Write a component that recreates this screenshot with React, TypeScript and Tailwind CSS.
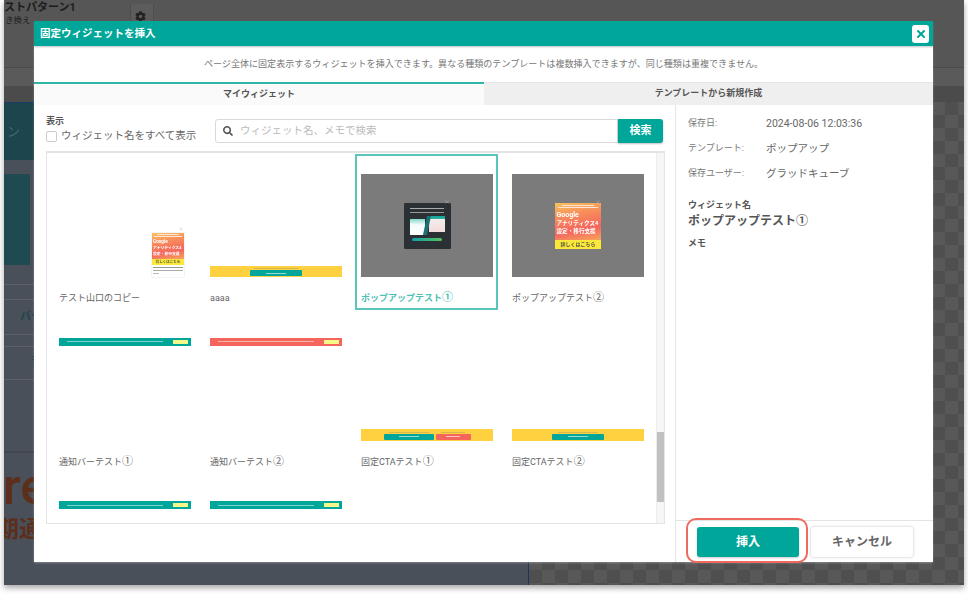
import { X } from "lucide-react";
import { FaCog, FaSearch } from "react-icons/fa";

function TinyText({ className }: { className: string }) {
  return <div className={`h-[1px] ${className}`} />;
}

function PopupClose({ className }: { className: string }) {
  return <X size={6} strokeWidth={1.5} className={`absolute text-[#b5b5b5] ${className}`} />;
}

function GaCard({ footerOnly }: { footerOnly?: boolean }) {
  return (
    <div className={`relative ${footerOnly ? "w-[46px] h-[46px]" : "w-[32px] h-[44px] bg-white shadow-[0_0_1px_#bbb]"}`}>
      <div className={`flex flex-col ${footerOnly ? "h-full" : "h-[32px]"}`}>
        <div className="flex-1 bg-[linear-gradient(170deg,#f6c55c_0%,#f8905a_30%,#f4655f_70%,#f8a55a_100%)]">
          <div className={`flex flex-col items-center gap-[1px] ${footerOnly ? "pt-[2px]" : "pt-[1px]"}`}>
            <TinyText className="bg-[#fde3d8] w-[70%]" />
            <TinyText className="bg-[#fde3d8] w-[85%]" />
          </div>
          <div className={`font-bold text-white ${footerOnly ? "text-[5.6px] leading-[8px] pl-[1.5px] pt-[3px]" : "text-[3.8px] leading-[6px] pl-[1px] pt-[2px]"}`}>
            <div className={footerOnly ? "text-[7px]" : "text-[4.6px]"}>Google</div>
            <div className="whitespace-nowrap">アナリティクス4</div>
            <div className="whitespace-nowrap">設定・移行支援</div>
          </div>
        </div>
        <div className={`bg-[#fbe83a] text-[#554] font-bold text-center whitespace-nowrap ${footerOnly ? "h-[9px] text-[5px] leading-[9px]" : "h-[6px] text-[3.5px] leading-[6px]"}`}>
          詳しくはこちら
        </div>
      </div>
      {!footerOnly && (
        <div className="flex flex-col gap-[2px] px-[1px] pt-[2px]">
          <TinyText className="bg-[#999]" />
          <TinyText className="bg-[#aaa]" />
          <TinyText className="bg-[#bbb] w-[6px]" />
        </div>
      )}
    </div>
  );
}

function DarkCard() {
  return (
    <div className="w-[47px] h-[46px] rounded-[1px] bg-[#2a3033] flex flex-col items-center pt-[5px]">
      <TinyText className="bg-[#aaa] w-[34px]" />
      <TinyText className="bg-[#999] w-[34px] mt-[3px]" />
      <div className="w-[35px] h-[19px] mt-[3px] flex">
        <div className="flex-1 mt-[3px] bg-[linear-gradient(180deg,#7fd8cc_0%,#f4fafa_35%,#ffffff_100%)]" />
        <div className="w-[4px] bg-[#1d6f74] -skew-x-12" />
        <div className="flex-1 mb-[3px] bg-[linear-gradient(180deg,#19a89b_0%,#19a89b_15%,#f4eded_20%,#f2dcdc_100%)]" />
      </div>
      <div className="w-[30px] h-[3px] mt-[3px] rounded-full bg-[linear-gradient(90deg,#12a0a8,#56c05c)]" />
    </div>
  );
}

function TopBar({ color }: { color: string }) {
  return (
    <div className={`w-full h-[8px] flex items-center pl-[8px] pr-[3px] ${color}`}>
      <div className="flex-1 pr-[10px]">
        <TinyText className="bg-white/50 w-[96px]" />
      </div>
      <div className="w-[15px] h-[4px] bg-[#f4f78a]" />
    </div>
  );
}

function CtaButton({ width, color }: { width: string; color: string }) {
  return (
    <div className={`${width} ${color} h-[6px] rounded-[1px] flex items-center justify-center`}>
      <TinyText className="bg-white/60 w-[40%]" />
    </div>
  );
}

function CtaBar({ two }: { two?: boolean }) {
  return (
    <div className="w-full h-[12px] bg-[#ffd040] flex justify-center items-end gap-[2px] pb-[1px]">
      <div className="flex flex-col items-center gap-[1px]">
        <TinyText className="bg-[#d6b94e] w-[40px]" />
        <CtaButton width={two ? "w-[50px]" : "w-[52px]"} color="bg-[#00a699]" />
      </div>
      {two && (
        <div className="flex flex-col items-center gap-[1px]">
          <TinyText className="bg-[#d6b94e] w-[24px]" />
          <CtaButton width="w-[35px]" color="bg-[#f4665c]" />
        </div>
      )}
    </div>
  );
}

function Cell({ label, mark, selected, thumb, thumbClass }: { label?: string; mark?: string; selected?: boolean; thumb: React.ReactNode; thumbClass: string }) {
  return (
    <div className={`h-[156px] w-[143px] shrink-0 border-2 px-[4px] pt-[18px] ${selected ? "border-[#5cc5bb]" : "border-transparent"}`}>
      <div className={`relative h-[103px] w-[132px] flex blur-[0.5px] ${thumbClass}`}>{thumb}</div>
      {label && (
        <div className={`mt-[15px] text-[9px] leading-[12px] whitespace-nowrap ${selected ? "font-bold text-[#4fbfb4]" : "text-[#666]"}`}>
          {label}
          {mark && <span className="text-[11px]">{mark}</span>}
        </div>
      )}
    </div>
  );
}

function Meta({ name, value }: { name: string; value: string }) {
  return (
    <div className="flex items-center h-[25px]">
      <div className="w-[78px] text-[9px] text-[#777]">{name}</div>
      <div className="text-[10.5px] text-[#666]">{value}</div>
    </div>
  );
}

export default function App() {
  return (
    <div className="w-[968px] h-[594px] bg-white pl-[4px] overflow-hidden [font-family:Roboto,'Noto_Sans_CJK_JP',sans-serif]">
      <div className="relative w-[960px] h-[585px] flex flex-col overflow-hidden shadow-[0_3px_6px_rgba(0,0,0,0.35)] bg-[#565656]">
        {/* page behind the overlay */}
        <div className="h-[68px] shrink-0 flex items-start border-b border-[#4a4a4a]">
          <div className="w-[126px] pt-[1px] text-[#1d1d1d]">
            <div className="text-[11px] font-bold leading-[13px] whitespace-nowrap">ストパターン1</div>
            <div className="text-[8.5px] leading-[13px] pl-[1px]">き換え</div>
          </div>
          <div className="w-[24px] h-[24px] mt-[4px] pr-[3px] flex items-center justify-center bg-[#5c5c5c] border-x border-[#4d4d4d] text-[#222]">
            <FaCog size={11} />
          </div>
        </div>
        <div className="h-[19px] shrink-0 bg-[#5a5a5a] border-b border-[#4c4c4c]" />
        <div className="h-[15px] shrink-0 bg-[#4b4b4b]" />
        <div className="flex-1 flex min-h-0">
          <div className="w-[525px] shrink-0 bg-[#4a505a] border-r border-[#1d355f] flex flex-col">
            <div className="h-[58px] shrink-0 bg-[#1c454e] border-t border-[#1a3a6a] flex items-center text-[#3d6a70] text-[13px] pl-[3px]">
              ン
            </div>
            <div className="h-[14px] shrink-0" />
            <div className="h-[91px] w-[26px] shrink-0 bg-[#1f4a52]" />
            <div className="h-[20px] shrink-0 border-b border-[#5a5f68]" />
            <div className="h-[15px] shrink-0 border-b border-[#5a5f68]" />
            <div className="h-[35px] shrink-0 border-b border-[#5a5f68] pl-[16px] pt-[9px] text-[11px] font-bold text-[#1c454e] whitespace-nowrap">バー</div>
            <div className="h-[12px] shrink-0 border-b border-[#5a5f68]" />
            <div className="h-[33px] shrink-0 border-b border-[#5a5f68] pl-[26px] pt-[7px] text-[11px] font-bold text-[#1c454e]">ラ</div>
            <div className="h-[73px] shrink-0 border-b-2 border-[#42464e]" />
            <div className="text-[50px] leading-[54px] text-[#5b2f1b] pt-[7px] -ml-[1px] font-medium">re</div>
            <div className="text-[23px] leading-[30px] font-bold text-[#5b2f1b] mt-[1px] -ml-[8px] whitespace-nowrap">期通</div>
          </div>
          <div className="flex-1 bg-[repeating-conic-gradient(#585858_0_25%,#4f4f4f_0_50%)] bg-size-[26px_26px]" />
        </div>

        {/* modal */}
        <div className="absolute left-[30px] top-[21px] w-[899px] h-[541px] bg-white flex flex-col shadow-[0_1px_2px_rgba(255,255,255,0.3)]">
          <div className="h-[25px] shrink-0 bg-[#00a699] flex items-center justify-between pl-[6px] pr-[4px] shadow-[0_1px_2px_rgba(0,0,0,0.25)] z-10">
            <div className="text-[10.5px] font-bold text-white">固定ウィジェットを挿入</div>
            <div className="w-[17px] h-[18px] rounded-[3px] bg-white flex items-center justify-center text-[#00a699]">
              <X size={12} strokeWidth={4} />
            </div>
          </div>
          <div className="h-[36px] shrink-0 flex items-center justify-center text-[9.05px] text-[#777] pt-[1px]">
            ページ全体に固定表示するウィジェットを挿入できます。異なる種類のテンプレートは複数挿入できますが、同じ種類は重複できません。
          </div>
          <div className="h-[23px] shrink-0 flex text-[9px] font-bold text-[#555]">
            <div className="w-[450px] bg-[#fafafa] border-t-2 border-[#2fb5a9] flex items-center justify-center">マイウィジェット</div>
            <div className="flex-1 bg-[#efefef] border-t border-[#e4e4e4] flex items-center justify-center">テンプレートから新規作成</div>
          </div>
          <div className="flex-1 flex min-h-0">
            <div className="w-[642px] shrink-0 border-r border-[#e6e6e6] pl-[12px] pr-[10px] flex flex-col">
              <div className="h-[46px] shrink-0 flex items-start pr-[2px]">
                <div className="w-[169px] pt-[10px]">
                  <div className="text-[9px] leading-[12px] font-bold text-[#555]">表示</div>
                  <label className="flex items-center gap-[4px] mt-[3px]">
                    <span className="w-[11px] h-[11px] rounded-[2px] border border-[#ccc] bg-white" />
                    <span className="text-[10.5px] leading-[12px] text-[#666] whitespace-nowrap">ウィジェット名をすべて表示</span>
                  </label>
                </div>
                <div className="flex-1 flex mt-[14px] h-[24px]">
                  <div className="flex-1 flex items-center gap-[7px] pl-[7px] border border-[#d9d9d9] rounded-l-[3px]">
                    <FaSearch size={10} className="text-[#555]" />
                    <span className="text-[10.5px] text-[#bbb]">ウィジェット名、メモで検索</span>
                  </div>
                  <div className="w-[45px] rounded-r-[3px] bg-[#00a699] flex items-center justify-center text-[11px] font-bold text-white shadow-[0_1px_2px_rgba(0,0,0,0.25)]">
                    検索
                  </div>
                </div>
              </div>
              <div className="h-[373px] shrink-0 border border-[#e4e4e4] border-t-2 flex">
                <div className="flex-1 overflow-hidden pl-[6px] pt-[1px]">
                  <div className="grid grid-cols-4 gap-x-[8px] gap-y-[7.5px] w-[596px]">
                    <Cell
                      label="テスト山口のコピー"
                      thumbClass="items-end justify-end pr-[7px]"
                      thumb={<><GaCard /><PopupClose className="right-[7px] top-[52px]" /></>}
                    />
                    <Cell
                      label="aaaa"
                      thumbClass="items-end"
                      thumb={
                        <div className="w-full h-[11px] bg-[#ffd040] flex flex-col items-center justify-end gap-[1px] pb-[1px]">
                          <TinyText className="bg-[#d6b94e] w-[44px]" />
                          <CtaButton width="w-[52px]" color="bg-[#00a699]" />
                        </div>
                      }
                    />
                    <Cell
                      selected
                      label="ポップアップテスト"
                      mark="①"
                      thumbClass="bg-[#7b7b7b] items-center justify-center"
                      thumb={<><DarkCard /><PopupClose className="right-[43px] top-[25px]" /></>}
                    />
                    <Cell
                      label="ポップアップテスト"
                      mark="②"
                      thumbClass="bg-[#7b7b7b] items-center justify-center"
                      thumb={<><GaCard footerOnly /><PopupClose className="right-[43px] top-[25px]" /></>}
                    />
                    <Cell label="通知バーテスト" mark="①" thumbClass="items-start" thumb={<TopBar color="bg-[#00a699]" />} />
                    <Cell label="通知バーテスト" mark="②" thumbClass="items-start" thumb={<TopBar color="bg-[#f4665c]" />} />
                    <Cell label="固定CTAテスト" mark="①" thumbClass="items-end" thumb={<CtaBar two />} />
                    <Cell label="固定CTAテスト" mark="②" thumbClass="items-end" thumb={<CtaBar />} />
                    <Cell thumbClass="items-start" thumb={<TopBar color="bg-[#00a699]" />} />
                    <Cell thumbClass="items-start" thumb={<TopBar color="bg-[#00a699]" />} />
                  </div>
                </div>
                <div className="w-[8px] shrink-0 bg-[#f6f6f6] border-l border-[#ececec] pt-[279px]">
                  <div className="h-[70px] bg-[#c1c1c1]" />
                </div>
              </div>
            </div>
            <div className="flex-1 flex flex-col min-w-0">
              <div className="flex-1 pl-[12px] pt-[6px]">
                <Meta name="保存日:" value="2024-08-06 12:03:36" />
                <Meta name="テンプレート:" value="ポップアップ" />
                <Meta name="保存ユーザー:" value="グラッドキューブ" />
                <div className="text-[9px] leading-[12px] font-bold text-[#555] mt-[13px]">ウィジェット名</div>
                <div className="text-[12px] leading-[16px] font-bold text-[#555] mt-[2px]">ポップアップテスト①</div>
                <div className="text-[9px] leading-[12px] font-bold text-[#555] mt-[8px]">メモ</div>
              </div>
              <div className="h-[42px] shrink-0 border-t border-[#e4e4e4] relative flex gap-[12px] pl-[21px] pt-[6px]">
                <div className="w-[102px] h-[30px] rounded-[3px] bg-[#00a699] flex items-center justify-center text-[12px] font-bold text-white shadow-[0_1px_2px_rgba(0,0,0,0.2)]">
                  挿入
                </div>
                <div className="w-[102px] h-[30px] rounded-[3px] bg-white flex items-center justify-center text-[12px] font-bold text-[#666] shadow-[0_0_3px_rgba(0,0,0,0.25)]">
                  キャンセル
                </div>
                {/* red highlight annotation */}
                <div className="absolute left-[10px] -top-[3px] w-[122px] h-[45px] rounded-[10px] border-2 border-[#f0695f]" />
              </div>
            </div>
          </div>
        </div>
      </div>
    </div>
  );
}
